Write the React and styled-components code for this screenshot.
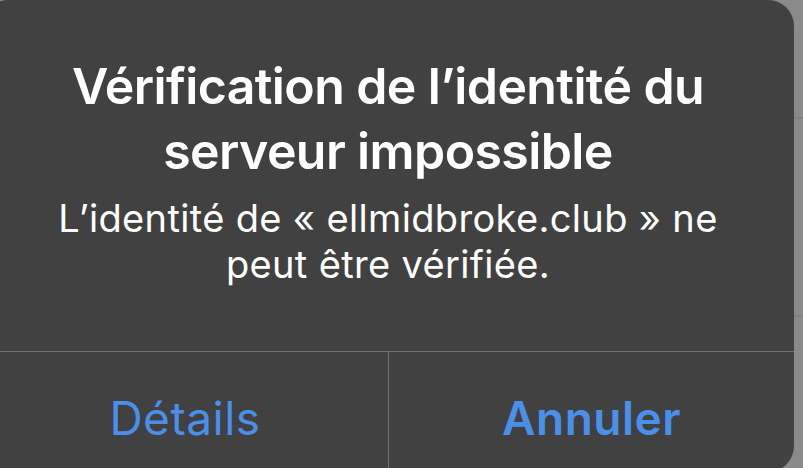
import React from "react";
import styled, { createGlobalStyle } from "styled-components";

const GlobalStyle = createGlobalStyle`
    html, body {
        margin: 0;
        padding: 0;
        height: 100%;
        overflow: hidden;
    }

    body {
        background: #8a8a8a;
        font-family: Inter, "Noto Sans", "Liberation Sans", sans-serif;
        -webkit-font-smoothing: antialiased;
    }
`;

function App() {
    return (
        <>
            <GlobalStyle />
            <Backdrop>
                <Alert>
                    <Content>
                        <Title>
                            Vérification de l’identité du
                            <br />
                            serveur impossible
                        </Title>
                        <Message>
                            L’identité de « ellmidbroke.club » ne
                            <br />
                            peut être vérifiée.
                        </Message>
                    </Content>
                    <Actions>
                        <ActionButton>Détails</ActionButton>
                        <ActionButton $primary $divided>Annuler</ActionButton>
                    </Actions>
                </Alert>
            </Backdrop>
        </>
    );
}

export default App;

const Backdrop = styled.div`
    width: 100vw;
    height: 100vh;
    background:
        linear-gradient(#818181, #818181) 0 117px / 100% 2px no-repeat,
        linear-gradient(#818181, #818181) 0 315px / 100% 2px no-repeat,
        #8a8a8a;
`;

const Alert = styled.div`
    display: flex;
    flex-direction: column;
    width: 812px;
    height: 472px;
    margin-left: -18px;
    background: #414141;
    border-radius: 26px;
    overflow: hidden;
`;

const Content = styled.div`
    height: 351px;
    box-sizing: border-box;
    padding-top: 54px;
    display: flex;
    flex-direction: column;
    align-items: center;
    text-align: center;
    color: #ffffff;
`;

const Title = styled.h1`
    margin: 0;
    font-size: 50px;
    font-weight: 600;
    line-height: 65px;
    letter-spacing: -0.6px;
    white-space: nowrap;
`;

const Message = styled.p`
    margin: 11px 0 0;
    font-size: 38px;
    font-weight: 400;
    line-height: 46px;
    letter-spacing: 0.35px;
    white-space: nowrap;
`;

const Actions = styled.div`
    flex: 1;
    display: grid;
    grid-template-columns: 1fr 1fr;
    border-top: 1px solid #6f6f6f;
`;

const ActionButton = styled.button`
    appearance: none;
    border: none;
    border-left: ${(p) => (p.$divided ? "1px solid #6f6f6f" : "none")};
    background: transparent;
    padding: 38px 0 0;
    display: flex;
    justify-content: center;
    align-items: flex-start;
    font-family: inherit;
    font-size: 46px;
    line-height: 56px;
    letter-spacing: 0.5px;
    font-weight: ${(p) => (p.$primary ? 600 : 400)};
    color: #4a8fea;
    cursor: pointer;
`;
